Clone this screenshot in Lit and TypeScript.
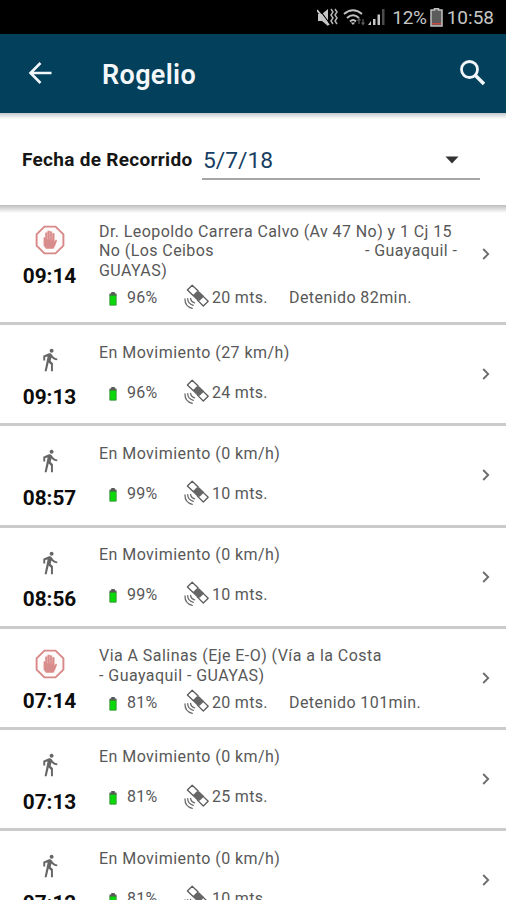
import { LitElement, html, css, nothing } from "lit";
import { customElement, property } from "lit/decorators.js";

interface Stop {
  time: string;
  stopped?: boolean;
  lines: string[];
  battery: string;
  accuracy: string;
  note?: string;
}

const STOPS: Stop[] = [
  { time: "09:14", stopped: true, lines: ["Dr. Leopoldo Carrera Calvo (Av 47 No) y 1 Cj 15", "No (Los Ceibos|- Guayaquil -", "GUAYAS)"], battery: "96%", accuracy: "20 mts.", note: "Detenido 82min." },
  { time: "09:13", lines: ["En Movimiento (27 km/h)"], battery: "96%", accuracy: "24 mts." },
  { time: "08:57", lines: ["En Movimiento (0 km/h)"], battery: "99%", accuracy: "10 mts." },
  { time: "08:56", lines: ["En Movimiento (0 km/h)"], battery: "99%", accuracy: "10 mts." },
  { time: "07:14", stopped: true, lines: ["Via A Salinas (Eje E-O) (Vía a la Costa", "- Guayaquil - GUAYAS)"], battery: "81%", accuracy: "20 mts.", note: "Detenido 101min." },
  { time: "07:13", lines: ["En Movimiento (0 km/h)"], battery: "81%", accuracy: "25 mts." },
  { time: "07:12", lines: ["En Movimiento (0 km/h)"], battery: "81%", accuracy: "10 mts." },
];

const handIcon = html`<svg width="30" height="30" viewBox="0 0 30 30">
  <path d="M9.4 1.6h11.2l7.8 7.8v11.2l-7.8 7.8H9.4l-7.8-7.8V9.4z" fill="#fffafa" stroke="#d78888" stroke-width="1.9"/>
  <path d="M8.6 12.500q1-.8 1.600.2V8q1.100-1.300 2.200 0V6.200q1.200-1.400 2.400 0V6.600q1.200-1 2.300.2V8.400q1.300-.9 2.400.2v8l1-1.600q1.400-.5 1.500.7l-2 5.400-1.600 2.700h-7.400l-2.400-3.200z" fill="#d98c8c"/>
  <path d="M12.400 8v6.500M14.800 7v7.500M17.100 8v6.500" stroke="#ecc0c0" stroke-width=".6"/>
</svg>`;

const walkIcon = html`<svg width="26" height="28" viewBox="0 0 24 24">
  <path fill="#666" d="M13.500 5.300c1 0 1.800-.8 1.800-1.800s-.8-1.800-1.800-1.800-1.800.8-1.800 1.800.8 1.800 1.800 1.800zM9.800 8.700L7 22.300h1.900l1.900-8 2.100 2v6h1.800v-7.300l-2.100-2 .7-3.200c1.300 1.500 3.200 2.400 5.400 2.400v-1.700c-1.900 0-3.400-1-4.200-2.400l-1-1.500c-.4-.6-1-.9-1.700-.9-.3 0-.5.1-.8.1L5.800 8v4.500h1.800V9.300z"/>
</svg>`;

const satelliteIcon = html`<svg width="26" height="26" viewBox="0 0 26 26">
  <g fill="#fff" stroke="#5c5c5c" stroke-width="1.300" stroke-linejoin="round">
    <path d="M8.200 1.200L3.400 6l6 5.800 4.800-4.800z"/>
    <path d="M18.200 11.400l-4.800 4.700 5.900 5.900 4.900-4.800z"/>
  </g>
  <path d="M13.200 7.400l2.200.2 4 3.900.1 1.600-3.800 3.700-2.300-.3-3.900-3.800-.2-1.500z" fill="#666"/>
  <g fill="none" stroke="#6c6c6c" stroke-width="1.300" stroke-linecap="round">
    <path d="M6.600 14.400q.4 3.400 4 4.400"/>
    <path d="M3.700 14.600q0 5.200 5.600 6.800"/>
    <path d="M1 15q-.2 7.400 7.300 9.400"/>
  </g>
</svg>`;

const batteryIcon = html`<svg width="8" height="14" viewBox="0 0 8 14">
  <path d="M2.200 0h3.600v1.500h1.700V4h-7V1.500h1.700z" fill="#565b56"/>
  <path d="M.8 3.500h6.400v9.700H.8z" fill="#0bd80b" stroke="#328d32" stroke-width=".8"/>
</svg>`;

@customElement("stop-row")
export class StopRow extends LitElement {
  @property({ attribute: false }) stop!: Stop;

  static styles = css`
    :host {
      display: grid;
      grid-template-columns: 99px 1fr 46px;
      box-sizing: border-box;
      flex: none;
      min-height: 101.200px;
      border-bottom: 3px solid #cbcbcc;
      color: #585858;
    }
    .moment { display: flex; flex-direction: column; align-items: center; }
    .icon { height: 30px; padding-top: 20px; display: flex; align-items: center; }
    .time { margin-top: 9.800px; font-weight: 700; font-size: 20.800px; line-height: 24px; color: #0c0c0c; }
    .body { padding-top: 17.300px; }
    :host(.tall) .body { padding-top: 16.500px; }
    :host(.tall) .time { margin-top: 9px; }
    .address { min-height: 33px; }
    .line { display: flex; font-size: 16px; line-height: 19.800px; letter-spacing: 0.450px; white-space: nowrap; }
    :host(.tall) .line { letter-spacing: 0.420px; }
    .rest { margin-left: 151px; }
    .meta { display: grid; grid-template-columns: 10px 18px 57px 28px 77px auto; align-items: center; height: 33px; font-size: 16px; letter-spacing: 0.300px; white-space: nowrap; }
    .battery { grid-column: 2; display: flex; padding-top: 3px; }
    .sat { display: flex; }
    .note { letter-spacing: 0.420px; }
    .chevron { padding-top: 42px; padding-left: 21px; display: block; }
    svg { display: block; flex: none; }
  `;

  render() {
    const s = this.stop;
    return html`
      <div class="moment">
        <div class="icon">${s.stopped ? handIcon : walkIcon}</div>
        <div class="time">${s.time}</div>
      </div>
      <div class="body">
        <div class="address">
          ${s.lines.map((line) => {
            const [head, tail] = line.split("|");
            return html`<div class="line"><span>${head}</span>${tail ? html`<span class="rest">${tail}</span>` : nothing}</div>`;
          })}
        </div>
        <div class="meta">
          <span class="battery">${batteryIcon}</span><span>${s.battery}</span>
          <span class="sat">${satelliteIcon}</span><span>${s.accuracy}</span>
          <span class="note">${s.note ?? ""}</span>
        </div>
      </div>
      <div class="chevron">
        <svg width="10" height="14" viewBox="0 0 10 14"><path d="M2.200 2L7.200 7l-5 5" fill="none" stroke="#6b6b6b" stroke-width="1.800"/></svg>
      </div>
    `;
  }
}

@customElement("app-root")
export class AppRoot extends LitElement {
  static styles = css`
    :host {
      display: flex;
      flex-direction: column;
      height: 900px;
      overflow: hidden;
      background: #fff;
      font-family: Roboto, "Liberation Sans", sans-serif;
    }
    .status { flex: none; height: 34px; background: #000; color: #c6c6c6; display: flex; align-items: center; justify-content: flex-end; padding-right: 12px; box-sizing: border-box; font-size: 19px; }
    .status svg { margin-top: 1px; }
    .percent { margin-left: 5px; letter-spacing: -0.300px; }
    .cell { margin-left: 3px; }
    .clock { margin-left: 4px; }
    .bar { flex: none; height: 78.500px; background: #02405b; color: #f4f7fa; display: flex; align-items: center; padding: 0 19px 0 26px; box-sizing: border-box; }
    .title { flex: 1; margin: 4px 0 0 48px; font-weight: 600; font-size: 27px; letter-spacing: 0.350px; }
    .filter { flex: none; height: 92.500px; box-sizing: border-box; padding: 24px 26px 0 22px; display: flex; background: linear-gradient(#c4c8ca, #fff 6px); }
    .label { width: 180px; padding-top: 11px; line-height: 24px; font-weight: 700; font-size: 19px; letter-spacing: 0.300px; color: #161616; white-space: nowrap; }
    .date { flex: 1; height: 43px; box-sizing: border-box; border-bottom: 2px solid #a6a6a6; display: flex; justify-content: space-between; padding: 10px 21px 0 1px; font-size: 22.800px; line-height: 28px; color: #173e62; }
    .caret { margin-top: 9px; }
    .list { flex: 1; min-height: 0; display: flex; flex-direction: column; background: linear-gradient(#bdbdbd, #fff 8px); }
    .tall { min-height: 120.300px; }
    svg { display: block; flex: none; }
  `;

  render() {
    return html`
      <div class="status">
        <svg width="70" height="22" viewBox="0 0 70 22">
          <path d="M1 7h4l6-5v17l-6-5H1z" fill="#c6c6c6"/>
          <path d="M2 2l11 15" stroke="#000" stroke-width="1.200"/>
          <path d="M0 3l12 15" stroke="#c6c6c6" stroke-width="1.800"/>
          <path d="M14 2l2 3-2 3 2 3-2 3 2 3M18 2l2 3-2 3 2 3-2 3 2 3" fill="none" stroke="#b5b5b5" stroke-width="1.500"/>
          <path d="M27 7q9-7.500 18 0M30 11q6-5.500 12 0M33 14.500q3-3 6 0" fill="none" stroke="#c2c2c2" stroke-width="2"/>
          <path d="M36 18l-2.200-2.500h4.400z" fill="#c2c2c2"/>
          <path d="M42 17v-5M40.500 13.500l1.500-2 1.500 2M46 12v5M44.500 15.500l1.500 2 1.500-2" fill="none" stroke="#5c5c5c" stroke-width="1.200"/>
          <path d="M51 18h3v-4zM56 18v-6h2.500v6zM60.500 18V7.500H63V18z" fill="#c6c6c6"/>
          <path d="M65 18V2h2.500v16z" fill="#4c4c4c"/>
        </svg>
        <span class="percent">12%</span>
        <svg class="cell" width="13" height="19" viewBox="0 0 13 19">
          <path d="M4.500 2V.8h4V2H12v16H1V2z" fill="#5b5b5b" stroke="#c2c2c2" stroke-width="1.500"/>
          <path d="M2 15h9v1.500H2z" fill="#c8483e"/>
        </svg>
        <span class="clock">10:58</span>
      </div>
      <div class="bar">
        <svg width="28" height="28" viewBox="0 0 28 28"><path d="M25.500 14H5M14.500 4L4.500 14l10 10" fill="none" stroke="#f2f6fa" stroke-width="2.600"/></svg>
        <div class="title">Rogelio</div>
        <svg width="28" height="28" viewBox="0 0 28 28"><circle cx="10.500" cy="10.500" r="8" fill="none" stroke="#f2f6fa" stroke-width="2.800"/><path d="M16.500 16.500l8.500 8.500" stroke="#f2f6fa" stroke-width="3.600"/></svg>
      </div>
      <div class="filter">
        <div class="label">Fecha de Recorrido</div>
        <div class="date"><span>5/7/18</span>
          <svg class="caret" width="14" height="8" viewBox="0 0 14 8"><path d="M.5.5h13L7 7.500z" fill="#333"/></svg>
        </div>
      </div>
      <div class="list">
        ${STOPS.map((s, i) => html`<stop-row class=${i === 0 ? "tall" : ""} .stop=${s}></stop-row>`)}
      </div>
    `;
  }
}
